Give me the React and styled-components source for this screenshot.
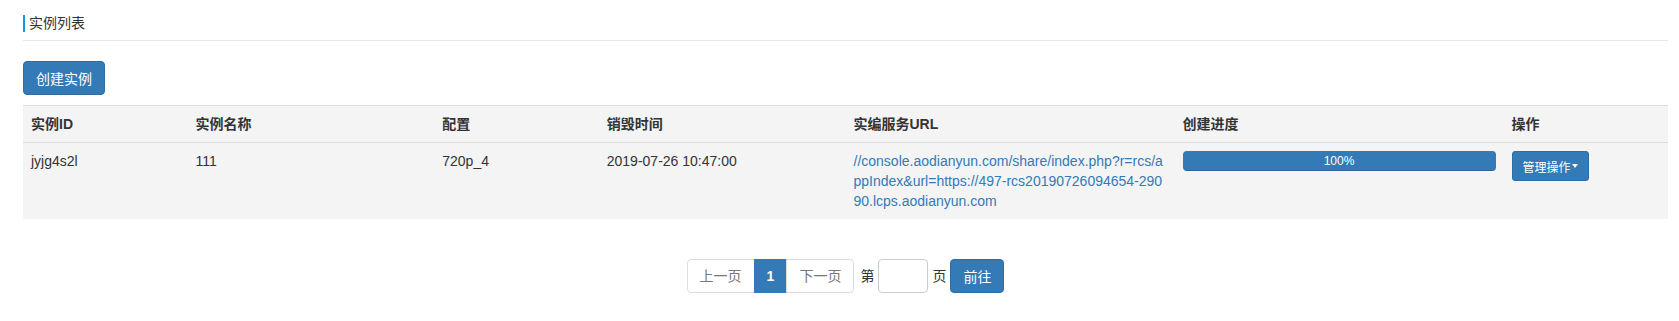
import React from 'react';
import styled, { createGlobalStyle } from 'styled-components';

const GlobalStyle = createGlobalStyle`
    body {
        margin: 0;
        background: #fff;
        font-family: "Liberation Sans", "Noto Sans CJK SC", sans-serif;
        font-size: 14px;
        line-height: 20px;
        color: #333;
    }
`;

const columns = [
    { title: '实例ID', width: '10%' },
    { title: '实例名称', width: '15%' },
    { title: '配置', width: '10%' },
    { title: '销毁时间', width: '15%' },
    { title: '实编服务URL', width: '20%' },
    { title: '创建进度', width: '20%' },
    { title: '操作', width: '10%' },
];

const rows = [
    {
        id: 'jyjg4s2l',
        name: '111',
        config: '720p_4',
        time: '2019-07-26 10:47:00',
        url: '//console.aodianyun.com/share/index.php?r=rcs/appIndex&url=https://497-rcs20190726094654-29090.lcps.aodianyun.com',
        progress: 100,
    },
];

const App = () => {
  return (
    <Page>
        <GlobalStyle />
        <TitleBar>
            <Title>实例列表</Title>
        </TitleBar>
        <Toolbar>
            <PrimaryButton>创建实例</PrimaryButton>
        </Toolbar>
        <Table>
            <colgroup>
                {columns.map(c => <col key={c.title} style={{ width: c.width }} />)}
            </colgroup>
            <thead>
                <tr>
                    {columns.map(c => <Th key={c.title}>{c.title}</Th>)}
                </tr>
            </thead>
            <tbody>
                {rows.map(r => (
                    <tr key={r.id}>
                        <Td>{r.id}</Td>
                        <Td>{r.name}</Td>
                        <Td>{r.config}</Td>
                        <Td>{r.time}</Td>
                        <Td><Link href="#">{r.url}</Link></Td>
                        <Td>
                            <Progress>
                                <ProgressBar style={{ width: r.progress + '%' }}>{r.progress}%</ProgressBar>
                            </Progress>
                        </Td>
                        <Td>
                            <SmallButton>管理操作<Caret /></SmallButton>
                        </Td>
                    </tr>
                ))}
            </tbody>
        </Table>
        <Pager>
            <PageList>
                <PageItem>上一页</PageItem>
                <PageItem active>1</PageItem>
                <PageItem>下一页</PageItem>
            </PageList>
            <PagerLabel>第</PagerLabel>
            <PageInput />
            <PagerLabel>页</PagerLabel>
            <GoButton>前往</GoButton>
        </Pager>
    </Page>
  )
}

export default App

const Page = styled.div`
    padding: 15px 11px 0 23px;
`;

const TitleBar = styled.div`
    padding-bottom: 8px;
    border-bottom: 1px solid #e8e8e8;
`;

const Title = styled.div`
    border-left: 2px solid #0e9bd8;
    padding-left: 4px;
    line-height: 17px;
    font-size: 14px;
    color: #333;
`;

const Toolbar = styled.div`
    padding: 20px 0 10px;
    display: flex;
`;

const PrimaryButton = styled.button`
    height: 34px;
    padding: 0 12px;
    font-family: inherit;
    font-size: 14px;
    color: #fff;
    background: #337ab7;
    border: 1px solid #2e6da4;
    border-radius: 4px;
`;

const Table = styled.table`
    width: 100%;
    table-layout: fixed;
    border-collapse: collapse;
    background: #f4f4f4;
    border-top: 1px solid #ddd;
`;

const Th = styled.th`
    text-align: left;
    font-weight: bold;
    padding: 8px;
    line-height: 20px;
    border-bottom: 1px solid #ddd;
`;

const Td = styled.td`
    vertical-align: top;
    padding: 8px;
    line-height: 20px;
`;

const Link = styled.a`
    color: #337ab7;
    text-decoration: none;
    word-break: break-all;
`;

const Progress = styled.div`
    height: 20px;
    background: #f5f5f5;
    border-radius: 4px;
    overflow: hidden;
    box-shadow: inset 0 1px 2px rgba(0, 0, 0, .1);
`;

const ProgressBar = styled.div`
    height: 100%;
    background: #337ab7;
    color: #fff;
    font-size: 12px;
    line-height: 20px;
    text-align: center;
    box-shadow: inset 0 -1px 0 rgba(0, 0, 0, .15);
`;

const SmallButton = styled.button`
    display: inline-flex;
    align-items: center;
    height: 30px;
    padding: 0 10px;
    font-family: inherit;
    font-size: 12px;
    color: #fff;
    background: #337ab7;
    border: 1px solid #2e6da4;
    border-radius: 3px;
`;

const Caret = styled.span`
    display: inline-block;
    width: 0;
    height: 0;
    margin-left: 1px;
    border-top: 4px solid #fff;
    border-left: 3px solid transparent;
    border-right: 3px solid transparent;
`;

const Pager = styled.div`
    display: flex;
    justify-content: center;
    align-items: center;
    gap: 4px;
    margin-top: 40px;
`;

const PageList = styled.div`
    display: flex;
    margin-right: 2px;
`;

const PageItem = styled.span`
    height: 34px;
    box-sizing: border-box;
    padding: 0 12px;
    line-height: 32px;
    font-size: 14px;
    border: 1px solid ${p => p.active ? '#337ab7' : '#ddd'};
    margin-left: -1px;
    background: ${p => p.active ? '#337ab7' : '#fff'};
    color: ${p => p.active ? '#fff' : '#777'};
    font-weight: ${p => p.active ? 'bold' : 'normal'};

    &:first-child {
        margin-left: 0;
        border-radius: 4px 0 0 4px;
    }
    &:last-child {
        border-radius: 0 4px 4px 0;
    }
`;

const PagerLabel = styled.span`
    font-size: 14px;
    color: #333;
`;

const PageInput = styled.input`
    width: 50px;
    height: 34px;
    box-sizing: border-box;
    border: 1px solid #ccc;
    border-radius: 4px;
    padding: 0 6px;
`;

const GoButton = styled.button`
    height: 34px;
    width: 54px;
    font-family: inherit;
    font-size: 14px;
    color: #fff;
    background: #337ab7;
    border: 1px solid #2e6da4;
    border-radius: 4px;
`;
